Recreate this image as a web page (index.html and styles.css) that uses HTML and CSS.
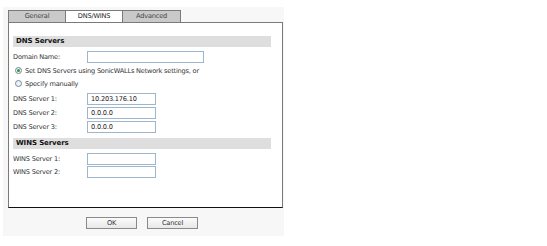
FILE: index.html
```html
<!DOCTYPE html>
<html>
<head>
<meta charset="utf-8">
<link rel="stylesheet" href="styles.css">
</head>
<body>
<div class="dialog">
  <div class="tabs">
    <div class="tab">General</div>
    <div class="tab active">DNS/WINS</div>
    <div class="tab">Advanced</div>
  </div>
  <div class="panel">
    <div class="section">DNS Servers</div>
    <div class="row first">
      <span class="label">Domain Name:</span>
      <span class="input wide"></span>
    </div>
    <div class="radio-row r1">
      <span class="radio checked"></span>
      <span>Set DNS Servers using SonicWALLs Network settings, or</span>
    </div>
    <div class="radio-row">
      <span class="radio"></span>
      <span>Specify manually</span>
    </div>
    <div class="row gap">
      <span class="label">DNS Server 1:</span>
      <span class="input">10.203.176.10</span>
    </div>
    <div class="row">
      <span class="label">DNS Server 2:</span>
      <span class="input">0.0.0.0</span>
    </div>
    <div class="row">
      <span class="label">DNS Server 3:</span>
      <span class="input">0.0.0.0</span>
    </div>
    <div class="section s2">WINS Servers</div>
    <div class="row first">
      <span class="label">WINS Server 1:</span>
      <span class="input"></span>
    </div>
    <div class="row tight">
      <span class="label">WINS Server 2:</span>
      <span class="input"></span>
    </div>
  </div>
  <div class="buttons">
    <div class="btn">OK</div>
    <div class="btn">Cancel</div>
  </div>
</div>
</body>
</html>
```
FILE: styles.css
```css
html, body {
  margin: 0;
  padding: 0;
  background: #ffffff;
}
body {
  font-family: "DejaVu Sans", Verdana, sans-serif;
  font-size: 6.6px;
  letter-spacing: -0.2px;
  color: #2a2a2a;
}
.dialog {
  margin: 7px 0 0 3px;
  width: 281px;
  height: 229px;
  background: #f7f7f7;
  box-sizing: border-box;
  padding: 3px 0 0 5px;
}
.tabs {
  display: flex;
  height: 12px;
}
.tab {
  width: 57px;
  height: 12px;
  box-sizing: border-box;
  border: 1px solid #7a7a7a;
  border-bottom: none;
  border-right: none;
  background: #c9c9c9;
  color: #444;
  text-align: center;
  line-height: 11px;
}
.tab:last-child {
  border-right: 1px solid #7a7a7a;
  width: 59px;
}
.tab.active {
  background: #ffffff;
  color: #222;
}
.panel {
  width: 275px;
  height: 186px;
  box-sizing: border-box;
  background: #fff;
  border: 1px solid #7a7a7a;
  border-bottom-color: #111;
  padding: 13px 0 0 4px;
}
.section {
  width: 258px;
  height: 11px;
  background: #dedede;
  font-weight: bold;
  font-size: 7px;
  letter-spacing: -0.1px;
  line-height: 11px;
  padding-left: 3px;
  box-sizing: border-box;
  color: #111;
}
.section.s2 {
  margin-top: 5px;
}
.row {
  display: flex;
  align-items: center;
  height: 12px;
  margin-top: 2px;
}
.row.first {
  margin-top: 4px;
}
.row.gap {
  margin-top: 3px;
}
.row.tight {
  margin-top: 1px;
}
.label {
  width: 74px;
  color: #333;
}
.input {
  width: 69px;
  height: 12px;
  box-sizing: border-box;
  border: 1px solid #9eb6cc;
  background: #fff;
  line-height: 10px;
  padding-left: 3px;
  color: #222;
}
.input.wide {
  width: 117px;
}
.radio-row {
  display: flex;
  align-items: center;
  height: 13px;
  padding-left: 2px;
  color: #333;
}
.radio-row.r1 {
  margin-top: 1px;
}
.radio {
  width: 7px;
  height: 7px;
  box-sizing: border-box;
  border: 1px solid #6b8aa8;
  border-radius: 50%;
  background: #f2f2f2;
  margin-right: 3px;
  position: relative;
}
.radio.checked::after {
  content: "";
  position: absolute;
  left: 1px;
  top: 1px;
  width: 3px;
  height: 3px;
  border-radius: 50%;
  background: #2a9a2a;
}
.buttons {
  display: flex;
  gap: 10px;
  margin: 9px 0 0 78px;
}
.btn {
  width: 51px;
  height: 12px;
  box-sizing: border-box;
  border: 1px solid #8a8a8a;
  background: linear-gradient(#fbfbfb, #e8e8e8);
  text-align: center;
  line-height: 10px;
  color: #333;
}
```
